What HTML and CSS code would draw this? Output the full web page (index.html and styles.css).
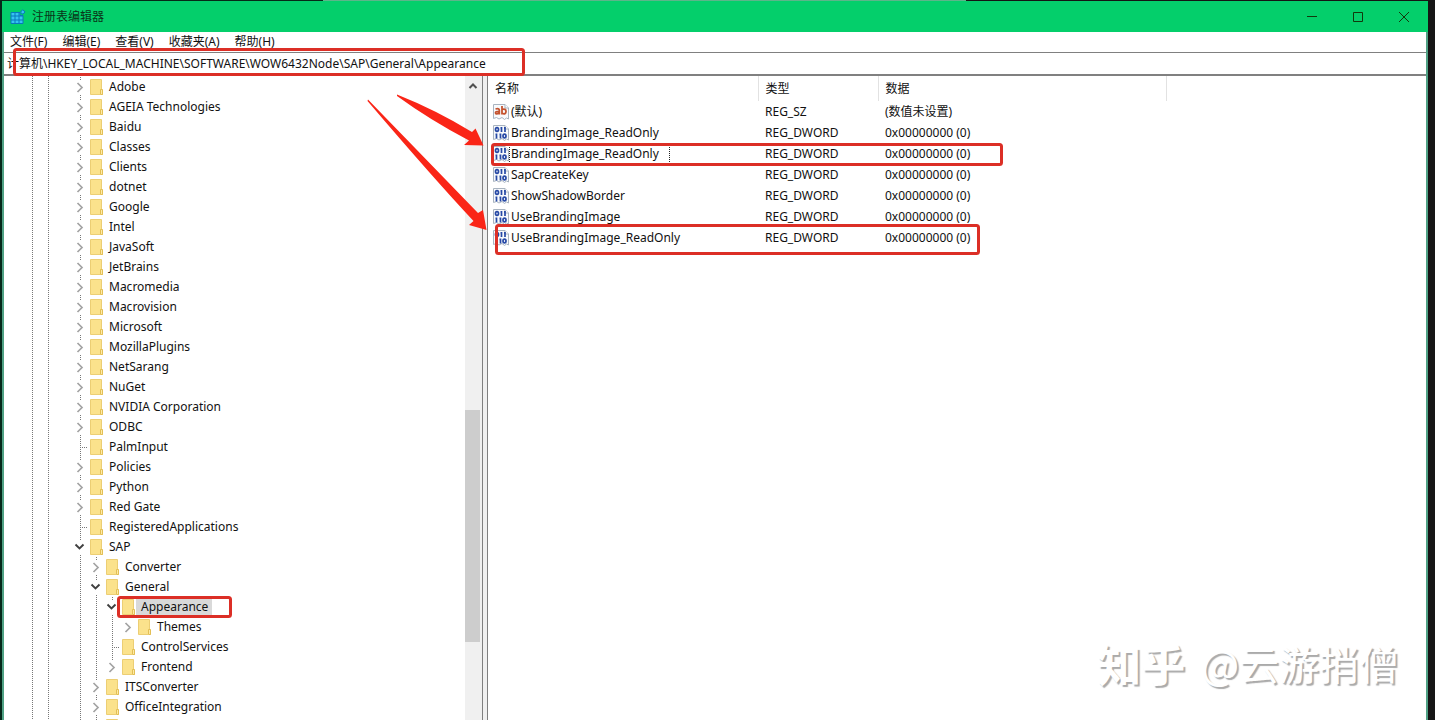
FILE: index.html
```html
<!DOCTYPE html>
<html lang="zh-CN">
<head>
<meta charset="utf-8">
<title>注册表编辑器</title>
<link rel="stylesheet" href="styles.css">
</head>
<body>
<svg class="defs" aria-hidden="true">
  <symbol id="folder" viewBox="0 0 16 16">
    <path d="M2.500 .5h11v10.500h1v4.500h-12z" fill="#fbe28c" stroke="#ecce74"/>
    <path d="M12.500 15v-4.500h2v5h-2" fill="#fdeaa6" stroke="#e3bf55"/>
  </symbol>
  <symbol id="closed" viewBox="0 0 16 14"><path d="M5.500 3l4.500 4.500-4.500 4.500" fill="none" stroke="#a3a3a3" stroke-width="1.700"/></symbol>
  <symbol id="open" viewBox="0 0 16 14"><path d="M3.500 4.500l4 4 4-4" fill="none" stroke="#404040" stroke-width="1.900"/></symbol>
  <symbol id="page" viewBox="0 0 16 16">
    <path d="M.5 .5h11.500l3.500 3.500v11l-2-1-2 1.500-2.500-2-3 1.500-2.500-1.500-3 1z" fill="#f8fafc" stroke="#a9b4c0"/>
    <path d="M12 .5v3.500h3.500" fill="#fff" stroke="#a9b4c0"/>
  </symbol>
  <symbol id="string" viewBox="0 0 16 16">
    <use href="#page"/>
    <g fill="none" stroke="#c4532f" stroke-width="1.800"><path d="M2.500 5q3.800-1 3.800 1.200v4.300M6.300 7.300q-3.800 0-3.800 1.500 0 2 3.800 .4M9 2v8.500M9 5.500q4-1.200 4 2t-4 1.900"/></g>
  </symbol>
  <symbol id="binary" viewBox="0 0 16 16">
    <use href="#page"/>
    <g fill="none" stroke="#2749a5" stroke-width="1.700"><ellipse cx="4" cy="4.500" rx="1.500" ry="1.800"/><path d="M8.500 2v5M12 2v5M7.500 2.800h1M11 2.800h1M3.500 8.500v5M7.500 8.500v5M2.500 9.300h1M6.500 9.300h1"/><ellipse cx="11.500" cy="11" rx="1.500" ry="1.800"/></g>
  </symbol>
</svg>
<div class="window">
  <header class="titlebar">
    <svg class="app-icon" viewBox="0 0 16 16" aria-hidden="true">
      <path d="M1 3.500h9v3h3v8H1z" fill="#35c5ef" stroke="#0878bd"/>
      <path d="M1 7h12M1 11h12M5 3.500v11M9 3.500v11" stroke="#0878bd" fill="none"/>
      <path d="M12.500 .8l2.500 2-2 2.500-2.500-2z" fill="#35c5ef" stroke="#0878bd"/>
    </svg>
    <h1 class="title">注册表编辑器</h1>
    <div class="controls">
      <button class="control" aria-label="最小化"><svg viewBox="0 0 12 12"><path d="M1 5.500h10"/></svg></button>
      <button class="control" aria-label="最大化"><svg viewBox="0 0 12 12"><path d="M1.500 1.500h9v9h-9z"/></svg></button>
      <button class="control" aria-label="关闭"><svg viewBox="0 0 12 12"><path d="M1 1l10 10M11 1L1 11"/></svg></button>
    </div>
  </header>
  <nav class="menu">
    <button>文件(F)</button><button>编辑(E)</button><button>查看(V)</button><button>收藏夹(A)</button><button>帮助(H)</button>
  </nav>
  <input class="address" aria-label="地址" value="计算机\HKEY_LOCAL_MACHINE\SOFTWARE\WOW6432Node\SAP\General\Appearance">
  <main class="panes">
    <section class="tree-pane">
      <div class="tree">
        <ul class="branch">
          <li><div class="node"><svg class="toggle"><use href="#closed"/></svg><svg class="icon"><use href="#folder"/></svg><span>Adobe</span></div></li>
          <li><div class="node"><svg class="toggle"><use href="#closed"/></svg><svg class="icon"><use href="#folder"/></svg><span>AGEIA Technologies</span></div></li>
          <li><div class="node"><svg class="toggle"><use href="#closed"/></svg><svg class="icon"><use href="#folder"/></svg><span>Baidu</span></div></li>
          <li><div class="node"><svg class="toggle"><use href="#closed"/></svg><svg class="icon"><use href="#folder"/></svg><span>Classes</span></div></li>
          <li><div class="node"><svg class="toggle"><use href="#closed"/></svg><svg class="icon"><use href="#folder"/></svg><span>Clients</span></div></li>
          <li><div class="node"><svg class="toggle"><use href="#closed"/></svg><svg class="icon"><use href="#folder"/></svg><span>dotnet</span></div></li>
          <li><div class="node"><svg class="toggle"><use href="#closed"/></svg><svg class="icon"><use href="#folder"/></svg><span>Google</span></div></li>
          <li><div class="node"><svg class="toggle"><use href="#closed"/></svg><svg class="icon"><use href="#folder"/></svg><span>Intel</span></div></li>
          <li><div class="node"><svg class="toggle"><use href="#closed"/></svg><svg class="icon"><use href="#folder"/></svg><span>JavaSoft</span></div></li>
          <li><div class="node"><svg class="toggle"><use href="#closed"/></svg><svg class="icon"><use href="#folder"/></svg><span>JetBrains</span></div></li>
          <li><div class="node"><svg class="toggle"><use href="#closed"/></svg><svg class="icon"><use href="#folder"/></svg><span>Macromedia</span></div></li>
          <li><div class="node"><svg class="toggle"><use href="#closed"/></svg><svg class="icon"><use href="#folder"/></svg><span>Macrovision</span></div></li>
          <li><div class="node"><svg class="toggle"><use href="#closed"/></svg><svg class="icon"><use href="#folder"/></svg><span>Microsoft</span></div></li>
          <li><div class="node"><svg class="toggle"><use href="#closed"/></svg><svg class="icon"><use href="#folder"/></svg><span>MozillaPlugins</span></div></li>
          <li><div class="node"><svg class="toggle"><use href="#closed"/></svg><svg class="icon"><use href="#folder"/></svg><span>NetSarang</span></div></li>
          <li><div class="node"><svg class="toggle"><use href="#closed"/></svg><svg class="icon"><use href="#folder"/></svg><span>NuGet</span></div></li>
          <li><div class="node"><svg class="toggle"><use href="#closed"/></svg><svg class="icon"><use href="#folder"/></svg><span>NVIDIA Corporation</span></div></li>
          <li><div class="node"><svg class="toggle"><use href="#closed"/></svg><svg class="icon"><use href="#folder"/></svg><span>ODBC</span></div></li>
          <li><div class="node"><i class="leaf"></i><svg class="icon"><use href="#folder"/></svg><span>PalmInput</span></div></li>
          <li><div class="node"><svg class="toggle"><use href="#closed"/></svg><svg class="icon"><use href="#folder"/></svg><span>Policies</span></div></li>
          <li><div class="node"><svg class="toggle"><use href="#closed"/></svg><svg class="icon"><use href="#folder"/></svg><span>Python</span></div></li>
          <li><div class="node"><svg class="toggle"><use href="#closed"/></svg><svg class="icon"><use href="#folder"/></svg><span>Red Gate</span></div></li>
          <li><div class="node"><i class="leaf"></i><svg class="icon"><use href="#folder"/></svg><span>RegisteredApplications</span></div></li>
          <li><div class="node"><svg class="toggle"><use href="#open"/></svg><svg class="icon"><use href="#folder"/></svg><span>SAP</span></div>
            <ul class="branch">
              <li><div class="node"><svg class="toggle"><use href="#closed"/></svg><svg class="icon"><use href="#folder"/></svg><span>Converter</span></div></li>
              <li><div class="node"><svg class="toggle"><use href="#open"/></svg><svg class="icon"><use href="#folder"/></svg><span>General</span></div>
                <ul class="branch">
                  <li><div class="node selected"><svg class="toggle"><use href="#open"/></svg><svg class="icon"><use href="#folder"/></svg><span>Appearance</span></div>
                    <ul class="branch single">
                      <li><div class="node"><svg class="toggle"><use href="#closed"/></svg><svg class="icon"><use href="#folder"/></svg><span>Themes</span></div></li>
                    </ul>
                  </li>
                  <li><div class="node"><i class="leaf"></i><svg class="icon"><use href="#folder"/></svg><span>ControlServices</span></div></li>
                  <li><div class="node"><svg class="toggle last"><use href="#closed"/></svg><svg class="icon"><use href="#folder"/></svg><span>Frontend</span></div></li>
                </ul>
              </li>
              <li><div class="node"><svg class="toggle"><use href="#closed"/></svg><svg class="icon"><use href="#folder"/></svg><span>ITSConverter</span></div></li>
              <li><div class="node"><svg class="toggle"><use href="#closed"/></svg><svg class="icon"><use href="#folder"/></svg><span>OfficeIntegration</span></div></li>
              <li><div class="node"><i class="leaf"></i><svg class="icon"><use href="#folder"/></svg></div></li>
            </ul>
          </li>
        </ul>
      </div>
      <div class="scrollbar">
        <button class="scroll-up" aria-label="向上滚动"><svg viewBox="0 0 10 8"><path d="M1.500 6L5 2.500 8.500 6"/></svg></button>
        <div class="track"><div class="thumb"></div></div>
      </div>
    </section>
    <div class="splitter"></div>
    <section class="values">
      <table>
        <colgroup><col class="c-name"><col class="c-type"><col class="c-data"><col></colgroup>
        <thead><tr><th>名称</th><th>类型</th><th>数据</th><td></td></tr></thead>
        <tbody>
          <tr><td><div class="value"><svg class="icon"><use href="#string"/></svg><span>(默认)</span></div></td><td>REG_SZ</td><td>(数值未设置)</td><td></td></tr>
          <tr><td><div class="value"><svg class="icon"><use href="#binary"/></svg><span>BrandingImage_ReadOnly</span></div></td><td>REG_DWORD</td><td>0x00000000 (0)</td><td></td></tr>
          <tr><td><div class="value focused"><svg class="icon"><use href="#binary"/></svg><span>BrandingImage_ReadOnly</span></div></td><td>REG_DWORD</td><td>0x00000000 (0)</td><td></td></tr>
          <tr><td><div class="value"><svg class="icon"><use href="#binary"/></svg><span>SapCreateKey</span></div></td><td>REG_DWORD</td><td>0x00000000 (0)</td><td></td></tr>
          <tr><td><div class="value"><svg class="icon"><use href="#binary"/></svg><span>ShowShadowBorder</span></div></td><td>REG_DWORD</td><td>0x00000000 (0)</td><td></td></tr>
          <tr><td><div class="value"><svg class="icon"><use href="#binary"/></svg><span>UseBrandingImage</span></div></td><td>REG_DWORD</td><td>0x00000000 (0)</td><td></td></tr>
          <tr><td><div class="value"><svg class="icon"><use href="#binary"/></svg><span>UseBrandingImage_ReadOnly</span></div></td><td>REG_DWORD</td><td>0x00000000 (0)</td><td></td></tr>
        </tbody>
      </table>
    </section>
  </main>
</div>
<svg class="annotations" width="1010" height="640" aria-hidden="true">
  <g fill="none" stroke="#dc2f26" stroke-width="3">
    <rect x="14.500" y="49.500" width="509" height="25" rx="2"/>
    <rect x="492.500" y="144.500" width="509" height="20" rx="2"/>
    <rect x="496.500" y="225.500" width="482" height="28" rx="2"/>
    <rect x="118.500" y="597.500" width="112" height="19" rx="2"/>
  </g>
  <g fill="#fa2517">
    <path d="M397 94.500Q436 110 472 132l3.500-3.500 8 17-19.500-.5 5-4.500Q430 120 397 96z"/>
    <path d="M368 99.500L478 213l5-3 3.500 20-17.500-5 4.500-4Q435 180 367.500 101z"/>
  </g>
</svg>
<div class="watermark"><span class="brand">知乎</span><span>@云游捎僧</span></div>
</body>
</html>
```
FILE: styles.css
```css
* { box-sizing: border-box; }

body {
  margin: 0;
  height: 100vh;
  overflow: hidden;
  display: flex;
  flex-direction: column;
  padding: 1px 7px 0 2px;
  background: linear-gradient(90deg, #062a18 323px, #5db58a 323px, #5db58a 966px, #151515 966px) 0 0 / 100% 1px no-repeat,
    linear-gradient(90deg, #06281a 2px, #151515 2px);
  color: #111;
  font: 12px/20px "Noto Sans", "Noto Sans CJK SC", sans-serif;
}

button, input { font: inherit; color: inherit; }
button { padding: 0; border: 0; background: none; }
ul { margin: 0; padding: 0; list-style: none; }
.defs { display: none; }

.window {
  flex: 1;
  min-height: 0;
  display: flex;
  flex-direction: column;
  border: solid #4fa184;
  border-width: 0 2px;
  background: #fff;
}

.titlebar {
  display: flex;
  align-items: center;
  height: 31px;
  margin: 0 -2px;
  padding-left: 8px;
  background: #04cf6b;
}
.app-icon { width: 16px; height: 16px; }
.title { flex: 1; margin: 0 0 0 6px; font-size: 12px; font-weight: 400; color: #0a3518; }
.controls { display: flex; padding-right: 1px; }
.control { display: flex; justify-content: center; align-items: center; width: 46px; height: 30px; }
.control svg { width: 12px; height: 12px; fill: none; stroke: #12390c; }

.menu { display: flex; gap: 15px; height: 20px; padding-left: 6px; }

.address {
  height: 24px;
  padding: 0 3px 2px;
  border: solid #808080;
  border-width: 1px 0 2px;
  border-radius: 0;
  background: #fff;
}

.panes { flex: 1; min-height: 0; display: flex; }
.tree-pane { display: flex; width: 478px; overflow: hidden; }

.tree {
  flex: 1;
  padding: 1px 0 0 68px;
  background:
    repeating-linear-gradient(#777 0 1px, #fff 1px 2px) 28px 0 / 1px 100% no-repeat,
    repeating-linear-gradient(#777 0 1px, #fff 1px 2px) 44px 0 / 1px 100% no-repeat;
}
.branch { background: repeating-linear-gradient(#777 0 1px, #fff 1px 2px) 8px 0 / 1px 100% no-repeat; }
.branch .branch { margin-left: 16px; }
.branch.single { background: none; }
.node { display: flex; align-items: center; height: 20px; white-space: nowrap; }
.node span { padding: 0 4px 0 5px; }
.toggle { width: 16px; height: 14px; background: #fff; }
.toggle.last { box-shadow: 0 3px #fff; }
.leaf { width: 8px; height: 1px; margin-left: 8px; background: repeating-linear-gradient(90deg, #777 0 1px, #fff 1px 2px); }
.icon { flex: none; width: 16px; height: 16px; }
.selected span { background: #d9d9d9; }

.scrollbar { display: flex; flex-direction: column; width: 17px; background: #f0f0f0; }
.scroll-up { display: flex; justify-content: center; align-items: center; width: 15px; height: 20px; }
.scroll-up svg { width: 10px; height: 8px; fill: none; stroke: #505050; stroke-width: 2; }
.track { flex: 1; padding-top: 314px; }
.thumb { width: 15px; height: 232px; background: #cdcdcd; }

.splitter { width: 6px; border: solid #808080; border-width: 0 1px; background: #f0f0f0; }

.values { flex: 1; min-width: 0; overflow: hidden; }
table { width: 100%; border-collapse: collapse; table-layout: fixed; }
.c-name { width: 270px; }
.c-type { width: 120px; }
.c-data { width: 288px; }
th { height: 25px; padding: 0 7px; border-right: 1px solid #e2e2e2; font-weight: 400; text-align: left; }
tbody td { height: 21px; padding: 0 7px; }
tbody td:first-child { padding: 0 5px; }
.value { display: flex; align-items: center; white-space: nowrap; }
.value span { padding-left: 2px; }
.focused span { padding-right: 10px; border: dotted #222; border-width: 0 1px; padding-left: 1px; }

.annotations { position: absolute; top: 0; left: 0; pointer-events: none; }

.watermark {
  position: absolute;
  right: 36px;
  bottom: 27px;
  display: flex;
  align-items: center;
  gap: 16px;
  color: #fff;
  font: 40px/60px "Noto Sans CJK SC", sans-serif;
  text-shadow: 2px 2px 1px #aaa;
}
.brand { font-size: 44px; font-weight: 700; }
```
